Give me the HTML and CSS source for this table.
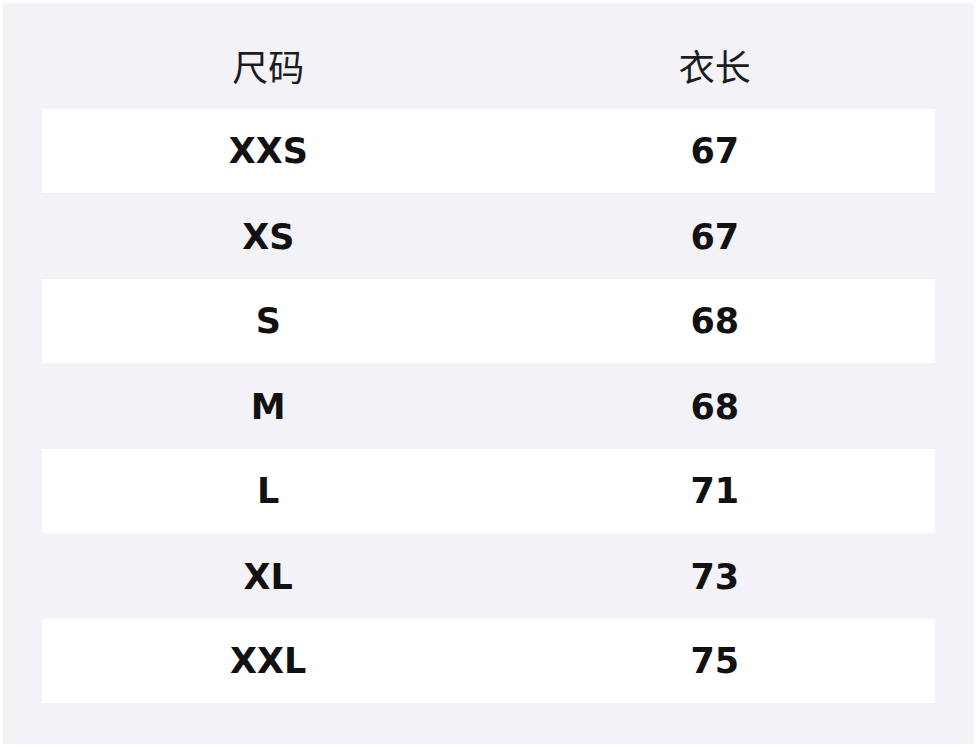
FILE: index.html
```html
<!DOCTYPE html>
<html lang="zh">
<head>
<meta charset="utf-8">
<link rel="stylesheet" href="styles.css">
</head>
<body>
<div class="panel">
  <div class="head">
    <div class="cell">尺码</div>
    <div class="cell">衣长</div>
  </div>
  <div class="row odd"><div class="cell">XXS</div><div class="cell">67</div></div>
  <div class="row"><div class="cell">XS</div><div class="cell">67</div></div>
  <div class="row odd"><div class="cell">S</div><div class="cell">68</div></div>
  <div class="row"><div class="cell">M</div><div class="cell">68</div></div>
  <div class="row odd"><div class="cell">L</div><div class="cell">71</div></div>
  <div class="row"><div class="cell">XL</div><div class="cell">73</div></div>
  <div class="row odd"><div class="cell">XXL</div><div class="cell">75</div></div>
</div>
</body>
</html>
```
FILE: styles.css
```css
html, body {
  margin: 0;
  padding: 0;
  background: #ffffff;
}
body {
  padding: 3px 4px 4px 3px;
  font-family: "DejaVu Sans", "Noto Sans CJK SC", sans-serif;
}
.panel {
  background: #f2f2f7;
  height: 741px;
  box-sizing: border-box;
  padding: 20px 39px 0 39px;
}
.head {
  display: grid;
  grid-template-columns: 1fr 1fr;
  height: 86px;
  align-items: center;
  font-family: "Noto Sans CJK SC", sans-serif;
  font-size: 36px;
  color: #1c1c1e;
}
.head .cell {
  text-align: center;
  padding-left: 6px;
  padding-bottom: 2px;
}
.row {
  display: grid;
  grid-template-columns: 1fr 1fr;
  height: 85px;
  align-items: center;
  font-weight: bold;
  font-size: 35px;
  color: #111111;
}
.row.odd {
  background: #ffffff;
  height: 84px;
  margin-bottom: 1px;
}
.row .cell {
  text-align: center;
  padding-left: 6px;
}
```
